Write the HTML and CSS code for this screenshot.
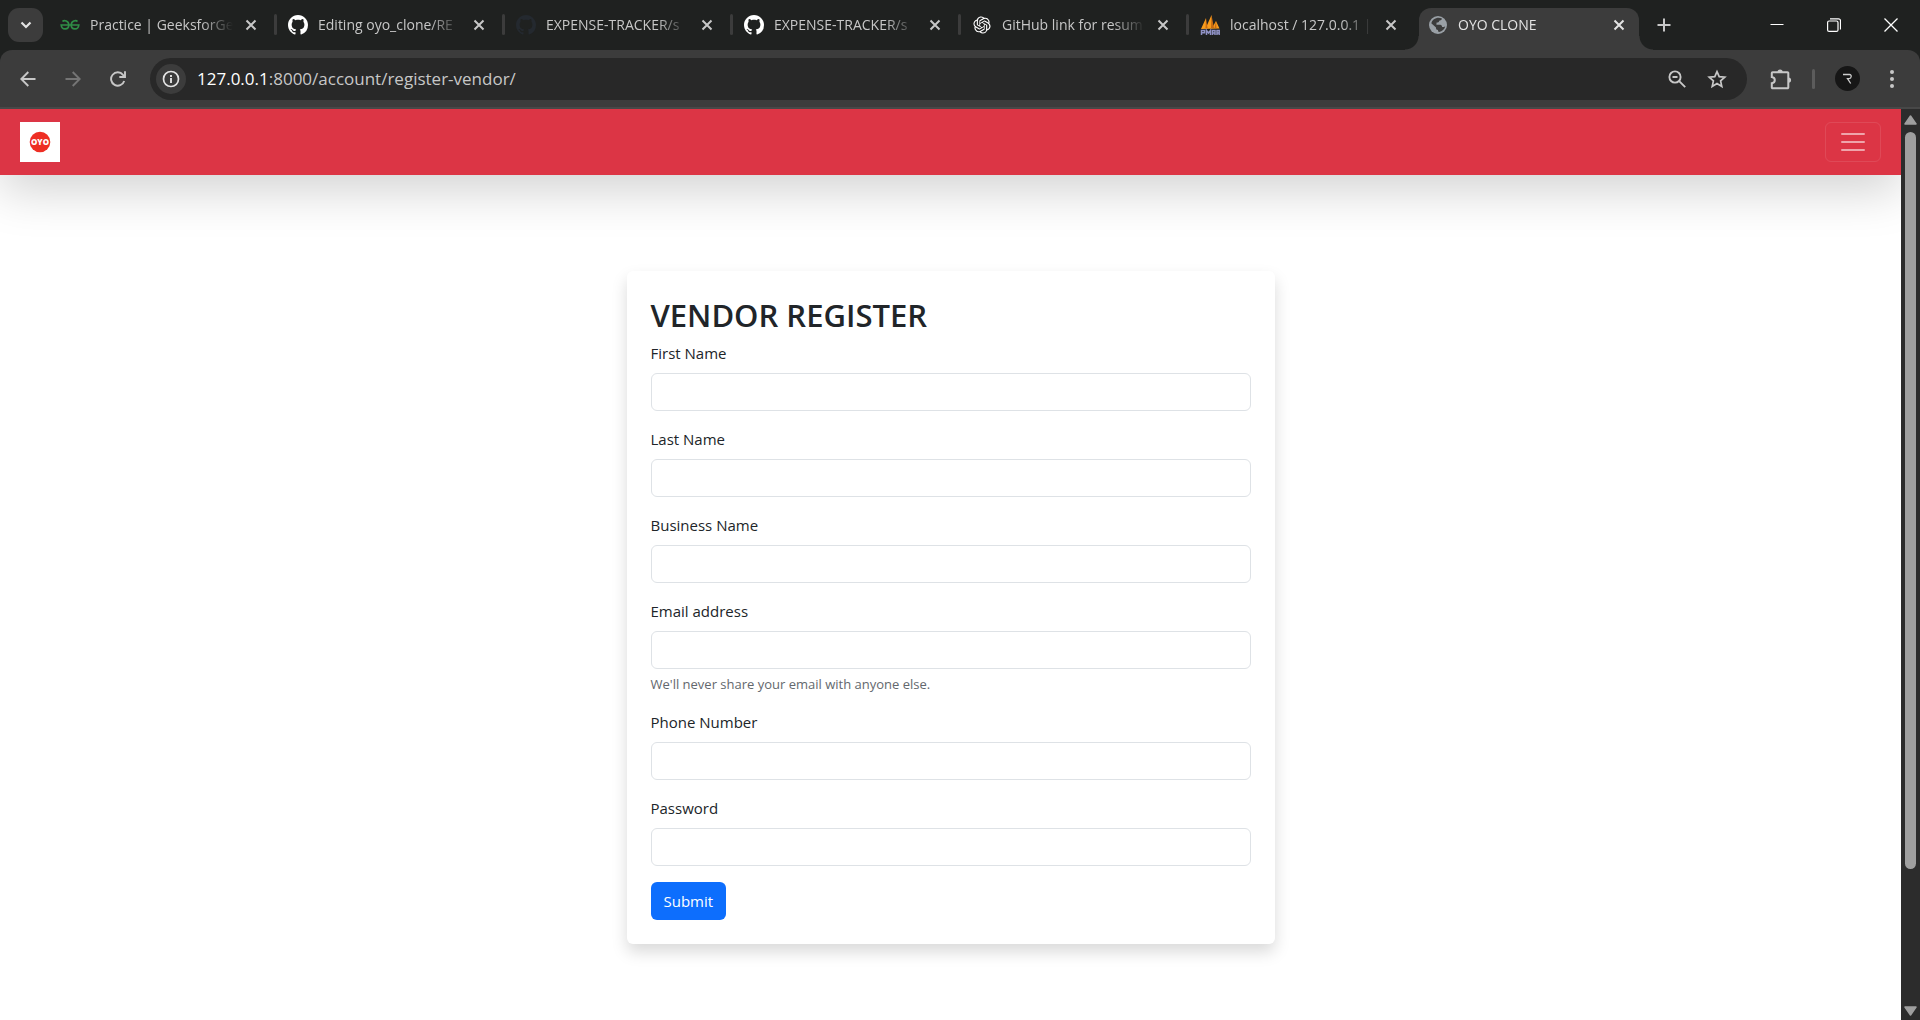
FILE: index.html
```html
<!DOCTYPE html>
<html lang="en">
<head>
<meta charset="utf-8">
<meta name="viewport" content="width=device-width, initial-scale=1">
<title>OYO CLONE</title>
<link rel="stylesheet" href="styles.css">
</head>
<body>
<svg class="defs" aria-hidden="true">
  <symbol id="x" viewBox="0 0 12 12"><path d="M1.5 1.5l9 9M10.500 1.500l-9 9" fill="none" stroke="currentColor" stroke-width="2"/></symbol>
  <symbol id="github" viewBox="0 0 16 16"><path fill="currentColor" d="M8 0C3.58 0 0 3.58 0 8c0 3.54 2.29 6.53 5.47 7.59.4.07.55-.17.55-.38 0-.19-.01-.82-.01-1.49-2.01.37-2.53-.49-2.69-.94-.09-.23-.48-.94-.82-1.13-.28-.15-.68-.52-.01-.53.63-.01 1.08.58 1.23.82.72 1.21 1.87.87 2.33.66.07-.52.28-.87.51-1.07-1.78-.2-3.64-.89-3.64-3.95 0-.87.31-1.59.82-2.15-.08-.2-.36-1.02.08-2.12 0 0 .67-.21 2.2.82.64-.18 1.32-.27 2-.27s1.36.09 2 .27c1.53-1.04 2.2-.82 2.2-.82.44 1.1.16 1.92.08 2.12.51.56.82 1.27.82 2.15 0 3.07-1.87 3.75-3.65 3.95.29.25.54.73.54 1.48 0 1.07-.01 1.93-.01 2.2 0 .21.15.46.55.38A8.01 8.01 0 0 0 16 8c0-4.42-3.58-8-8-8z"/></symbol>
</svg>

<header class="browser">
  <div class="tabstrip">
    <button class="tab-search" aria-label="Search tabs"><svg width="12" height="8" viewBox="0 0 12 8"><path d="M1.500 1.500L6 6l4.500-4.500" fill="none" stroke="currentColor" stroke-width="2.200"/></svg></button>
    <nav class="tabs" aria-label="Open tabs">
      <div class="tab">
        <svg class="favicon" viewBox="0 0 20 20" fill="none" stroke="#2f8d46" stroke-width="1.700"><path d="M2.500 6.500C4 4.800 8.800 5.500 8.800 10c0 5-7 5.500-7.600 0h17.600c-.6 5.500-7.600 5-7.600 0 0-4.500 4.800-5.200 6.300-3.500"/></svg>
        <a class="title" href="#">Practice | GeeksforGe</a>
        <button class="close" aria-label="Close tab"><svg><use href="#x"/></svg></button>
      </div>
      <div class="tab">
        <svg class="favicon white"><use href="#github"/></svg>
        <a class="title" href="#">Editing oyo_clone/RE</a>
        <button class="close" aria-label="Close tab"><svg><use href="#x"/></svg></button>
      </div>
      <div class="tab">
        <svg class="favicon navy"><use href="#github"/></svg>
        <a class="title" href="#">EXPENSE-TRACKER/s</a>
        <button class="close" aria-label="Close tab"><svg><use href="#x"/></svg></button>
      </div>
      <div class="tab">
        <svg class="favicon white"><use href="#github"/></svg>
        <a class="title" href="#">EXPENSE-TRACKER/s</a>
        <button class="close" aria-label="Close tab"><svg><use href="#x"/></svg></button>
      </div>
      <div class="tab">
        <svg class="favicon white" viewBox="-2 -2 28 28"><path fill="currentColor" d="M22.2819 9.8211a5.9847 5.9847 0 0 0-.5157-4.9108 6.0462 6.0462 0 0 0-6.5098-2.9A6.0651 6.0651 0 0 0 4.9807 4.1818a5.9847 5.9847 0 0 0-3.9977 2.9 6.0462 6.0462 0 0 0 .7427 7.0966 5.98 5.98 0 0 0 .511 4.9107 6.051 6.051 0 0 0 6.5146 2.9001A5.9847 5.9847 0 0 0 13.2599 24a6.0557 6.0557 0 0 0 5.7718-4.2058 5.9894 5.9894 0 0 0 3.9977-2.9001 6.0557 6.0557 0 0 0-.7475-7.073zm-9.022 12.6081a4.4755 4.4755 0 0 1-2.8764-1.0408l.1419-.0804 4.7783-2.7582a.7948.7948 0 0 0 .3927-.6813v-6.7369l2.02 1.1686a.071.071 0 0 1 .038.052v5.5826a4.504 4.504 0 0 1-4.4945 4.4944zm-9.6607-4.1254a4.4708 4.4708 0 0 1-.5346-3.0137l.142.0852 4.783 2.7582a.7712.7712 0 0 0 .7806 0l5.8428-3.3685v2.3324a.0804.0804 0 0 1-.0332.0615L9.74 19.9502a4.4992 4.4992 0 0 1-6.1408-1.6464zM2.3408 7.8956a4.485 4.485 0 0 1 2.3655-1.9728V11.6a.7664.7664 0 0 0 .3879.6765l5.8144 3.3543-2.0201 1.1685a.0757.0757 0 0 1-.071 0l-4.8303-2.7865A4.504 4.504 0 0 1 2.3408 7.872zm16.5963 3.8558L13.1038 8.364 15.1192 7.2a.0757.0757 0 0 1 .071 0l4.8303 2.7913a4.4944 4.4944 0 0 1-.6765 8.1042v-5.6772a.79.79 0 0 0-.407-.667zm2.0107-3.0231l-.142-.0852-4.7735-2.7818a.7759.7759 0 0 0-.7854 0L9.409 9.2297V6.8974a.0662.0662 0 0 1 .0284-.0615l4.8303-2.7866a4.4992 4.4992 0 0 1 6.6802 4.66zM8.3065 12.863l-2.02-1.1638a.0804.0804 0 0 1-.038-.0567V6.0742a4.4992 4.4992 0 0 1 7.3757-3.4537l-.142.0805L8.704 5.459a.7948.7948 0 0 0-.3927.6813zm1.0976-2.3654l2.602-1.4998 2.6069 1.4998v2.9994l-2.5974 1.4997-2.6067-1.4997Z"/></svg>
        <a class="title" href="#">GitHub link for resum</a>
        <button class="close" aria-label="Close tab"><svg><use href="#x"/></svg></button>
      </div>
      <div class="tab">
        <svg class="favicon" viewBox="0 0 20 20"><path fill="#f89c1c" d="M1 14L6 3v9.500L11.500 0l1 12L16 6l3.500 7.500z"/><path fill="#c76a12" d="M6 3l1.500 10h-2zM11.500 0L14 13h-3zM16 6l.5 7h-2z"/><path fill="none" stroke="#8f91c4" stroke-width="1.500" d="M1.500 20v-4.500h3v2.300h-3M6.500 20v-4.500l2 2.500 2-2.500V20M12.500 20v-4.500h2.500V20m-2.500-2h2.500M17 20v-4.500h2.200V20m-2.200-2h2.200"/></svg>
        <a class="title" href="#">localhost / 127.0.0.1 |</a>
        <button class="close" aria-label="Close tab"><svg><use href="#x"/></svg></button>
      </div>
      <div class="tab active">
        <svg class="favicon" viewBox="0 0 20 20"><circle cx="10" cy="10" r="9" fill="#9aa0a6"/><path fill="#3c3c3c" d="M8.800 3C9.500 2.500 12 2.400 14 3.600c-.2 1.400-1.500 1.900-2.800 2.100-.3 1.500-1.200 2-2.600 1.900l-.2 2.100h3.800c1.300 0 1.900 1 1.900 2.300h1.600c.5 0 .8-.6 1.500-.6-.7 2.700-3 5-6 5.600-.9-.2-1.300-1-1.200-2.100-1.700 0-2-.8-2-2.500L3.300 8.200C4 5.500 6 3.500 8.800 3z"/><path fill="#9aa0a6" d="M3.300 9L8 13.400c0 .8.500 1.200 1.500 1.300v2.400C5.600 16.800 2.800 13.500 3.300 9z" opacity=".25"/></svg>
        <a class="title" href="#" aria-current="page">OYO CLONE</a>
        <button class="close" aria-label="Close tab"><svg><use href="#x"/></svg></button>
      </div>
    </nav>
    <button class="new-tab" aria-label="New tab"><svg width="14" height="14" viewBox="0 0 14 14"><path d="M7 .5v13M.5 7h13" stroke="currentColor" stroke-width="2"/></svg></button>
    <div class="window-controls">
      <button aria-label="Minimize"><svg width="14" height="14" viewBox="0 0 14 14"><path d="M.5 6.500h13" stroke="currentColor"/></svg></button>
      <button aria-label="Restore"><svg width="14" height="14" viewBox="0 0 14 14" fill="none" stroke="currentColor" stroke-width="1.200"><rect x=".6" y="3" width="10.400" height="10.400" rx="1.500"/><path d="M3 .8h8.500a2 2 0 0 1 2 2V11.500"/></svg></button>
      <button aria-label="Close window"><svg width="14" height="14" viewBox="0 0 14 14"><path d="M.5.5l13 13M13.500.5l-13 13" stroke="currentColor" stroke-width="1.300"/></svg></button>
    </div>
  </div>

  <div class="toolbar">
    <div class="nav-buttons">
      <button aria-label="Back"><svg width="16" height="16" viewBox="0 0 16 16" fill="none" stroke="currentColor" stroke-width="1.900"><path d="M15.500 8H1.800M8.300 1L1.300 8l7 7"/></svg></button>
      <button class="dim" aria-label="Forward"><svg width="16" height="16" viewBox="0 0 16 16" fill="none" stroke="currentColor" stroke-width="1.900"><path d="M.5 8h13.700M7.700 1l7 7-7 7"/></svg></button>
      <button aria-label="Reload"><svg width="16" height="16" viewBox="0 0 16 16" fill="none" stroke="currentColor" stroke-width="1.900"><path d="M14.200 10A6.700 6.700 0 1 1 13 3.800l1.500 1.700"/><path d="M15 .3V6H9.300"/></svg></button>
    </div>
    <div class="omnibox">
      <button class="site-info" aria-label="Site information"><svg width="18" height="18" viewBox="0 0 18 18"><circle cx="9" cy="9" r="7.500" fill="none" stroke="currentColor" stroke-width="1.700"/><path d="M9 8v5M9 5v2" stroke="currentColor" stroke-width="1.900"/></svg></button>
      <div class="address"><label for="url">127.0.0.1</label><input id="url" type="text" value=":8000/account/register-vendor/"></div>
      <button aria-label="Zoom"><svg width="18" height="18" viewBox="0 0 18 18" fill="none" stroke="currentColor" stroke-width="1.900"><circle cx="7" cy="7" r="5.600"/><path d="M11.200 11.200l6 6M4.500 7h5"/></svg></button>
      <button aria-label="Bookmark"><svg width="20" height="20" viewBox="0 0 20 20" fill="none" stroke="currentColor" stroke-width="1.700"><path d="M10 2.600l2.200 5.100 5.600.5-4.200 3.700 1.200 5.500-4.800-2.900-4.800 2.900 1.200-5.500-4.200-3.700 5.600-.5z"/></svg></button>
    </div>
    <div class="tools">
      <button aria-label="Extensions"><svg width="22" height="22" viewBox="0 0 22 22"><path d="M2.600 4.200h14.900a.8.800 0 0 1 .8.800v14.500a.8.800 0 0 1-.8.800H2.600a.8.800 0 0 1-.8-.8v-4.300c4-.4 4-5.800 0-6.200V5a.8.800 0 0 1 .8-.8z" fill="none" stroke="currentColor" stroke-width="2"/><path d="M7.500 4a2.600 2.600 0 0 1 5.200 0zM18.500 9.400a2.600 2.600 0 0 1 0 5.200z" fill="currentColor"/></svg></button>
      <span class="divider"></span>
      <button class="profile" aria-label="Profile"><svg width="25" height="25" viewBox="0 0 25 25"><circle cx="12.500" cy="12.500" r="12.500" fill="#161616"/><path d="M8 8.500h6.500c2.500 0 2.200 4-.5 4.200h-1.500l3.200 4.800" fill="none" stroke="#ccc" stroke-width="1.300"/></svg></button>
      <button class="menu" aria-label="Menu"><svg width="4" height="18" viewBox="0 0 4 18" fill="currentColor"><circle cx="2" cy="2" r="2"/><circle cx="2" cy="9" r="2"/><circle cx="2" cy="16" r="2"/></svg></button>
    </div>
  </div>
</header>

<div class="viewport">
  <div class="page">
    <nav class="navbar" aria-label="Main">
      <a class="brand" href="#" aria-label="OYO home"><svg width="40" height="40" viewBox="0 0 40 40"><path fill="#fff" d="M0 0h40v40H0z"/><circle cx="20" cy="20" r="10.300" fill="#ee2e24"/><text x="20" y="23" text-anchor="middle">OYO</text></svg></a>
      <button class="toggler" aria-label="Toggle navigation"><svg width="30" height="30" viewBox="0 0 30 30"><path d="M4 7h22M4 15h22M4 23h22" stroke="#fff" stroke-opacity=".55" stroke-width="2" stroke-linecap="round"/></svg></button>
    </nav>
    <main class="content">
      <form class="card" onsubmit="return false">
        <h2>VENDOR REGISTER</h2>
        <div class="field"><label for="first">First Name</label><input id="first" type="text"></div>
        <div class="field"><label for="last">Last Name</label><input id="last" type="text"></div>
        <div class="field"><label for="business">Business Name</label><input id="business" type="text"></div>
        <div class="field"><label for="email">Email address</label><input id="email" type="email" aria-describedby="email-help"><small id="email-help">We'll never share your email with anyone else.</small></div>
        <div class="field"><label for="phone">Phone Number</label><input id="phone" type="tel"></div>
        <div class="field"><label for="password">Password</label><input id="password" type="password"></div>
        <button class="submit" type="submit">Submit</button>
      </form>
    </main>
  </div>
  <div class="scrollbar" aria-hidden="true">
    <svg width="13" height="10" viewBox="0 0 13 10"><path d="M6.500 1L12 9H1z" fill="#9f9f9f" stroke="#9f9f9f" stroke-width="1.500" stroke-linejoin="round"/></svg>
    <div class="track"><div class="thumb"></div></div>
    <svg width="13" height="10" viewBox="0 0 13 10"><path d="M6.500 9L12 1H1z" fill="#9f9f9f" stroke="#9f9f9f" stroke-width="1.500" stroke-linejoin="round"/></svg>
  </div>
</div>
</body>
</html>
```
FILE: styles.css
```css
* { box-sizing: border-box; }

body {
  margin: 0;
  height: 100vh;
  display: flex;
  flex-direction: column;
  overflow: hidden;
  background: #fff;
  color: #212529;
  font: 15px/24px "Open Sans", "Noto Sans", sans-serif;
}

button, input { font: inherit; color: inherit; }
button { padding: 0; border: 0; background: none; }
a { color: inherit; text-decoration: none; }
svg { display: block; flex: none; }
.defs { position: absolute; width: 0; height: 0; }

/* Tab strip */
.browser { flex: none; background: #1f2120; color: #c7c7c7; }
.tabstrip { display: flex; align-items: center; height: 50px; padding: 0 1px 0 8px; }
.tab-search {
  display: grid;
  place-items: center;
  width: 35px;
  height: 34px;
  border-radius: 11px;
  background: #3c3c3c;
  color: #e3e3e3;
}
.tabs { display: flex; align-self: stretch; flex: 0 1 1596px; margin-left: 2px; min-width: 0; }
.tab {
  position: relative;
  flex: 1 1 0;
  min-width: 0;
  display: flex;
  align-items: center;
  padding: 0 16px 0 15px;
  font-size: 14px;
}
.tab::after {
  content: "";
  position: absolute;
  right: -4px;
  top: 14px;
  width: 3px;
  height: 21px;
  border-radius: 2px;
  background: #3c3c3c;
}
.tab:nth-last-child(2)::after { display: none; }
.favicon { width: 20px; height: 20px; }
.white { color: #fff; }
.navy { color: #24292f; }
.title {
  flex: 1;
  min-width: 0;
  margin: 0 12px 0 10px;
  overflow: hidden;
  white-space: nowrap;
  -webkit-mask-image: linear-gradient(90deg, #000 calc(100% - 32px), transparent);
  mask-image: linear-gradient(90deg, #000 calc(100% - 32px), transparent);
}
.close svg { width: 12px; height: 12px; }
.active { margin-top: 8px; padding-bottom: 8px; color: #e3e3e3; }
.active::before {
  content: "";
  position: absolute;
  inset: 0 2px 0 6px;
  border-radius: 12px 12px 0 0;
  background: #3c3c3c;
}
/* Curved feet where the selected tab meets the toolbar */
.active::after {
  inset: auto -12px 0 -8px;
  width: auto;
  height: 14px;
  border-radius: 0;
  background:
    radial-gradient(circle at 0 0, transparent 13px, #3c3c3c 14px) left / 14px 14px no-repeat,
    radial-gradient(circle at 100% 0, transparent 13px, #3c3c3c 14px) right / 14px 14px no-repeat;
}
.active > * { position: relative; }
.new-tab { margin-left: 16px; }
.window-controls { display: flex; margin-left: auto; color: #fff; }
.window-controls button { display: grid; place-items: center; width: 57px; height: 48px; }

/* Toolbar */
.toolbar {
  display: flex;
  align-items: center;
  height: 59px;
  padding: 8px 26px 8px 20px;
  border-bottom: 2px solid #484848;
  border-radius: 12px 12px 0 0;
  background: #3c3c3c;
}
.nav-buttons { display: flex; gap: 29px; width: 130px; }
.dim { color: #757575; }
.omnibox {
  flex: 1;
  min-width: 0;
  display: flex;
  align-items: center;
  gap: 21px;
  height: 42px;
  padding: 0 20px 0 6px;
  border-radius: 21px;
  background: #282828;
}
.site-info {
  display: grid;
  place-items: center;
  width: 30px;
  height: 30px;
  border-radius: 50%;
  background: #3c3c3c;
  color: #e3e3e3;
}
.address { flex: 1; min-width: 0; display: flex; margin-left: -10px; font-size: 17px; }
.address label { color: #fff; }
.address input { flex: 1; min-width: 0; padding: 0; border: 0; outline: 0; background: none; color: #c7c7c7; }
.tools { display: flex; align-items: center; margin-left: 23px; }
.divider { width: 3px; height: 20px; margin: 0 20px; border-radius: 2px; background: #5c5c5c; }
.menu { margin-left: 30px; }

/* Page area */
.viewport { flex: 1; min-height: 0; display: flex; }
.page { flex: 1; min-width: 0; overflow: hidden; }
.navbar {
  display: flex;
  align-items: center;
  justify-content: space-between;
  height: 66px;
  padding: 0 20px;
  background: #dc3545;
  box-shadow: 0 16px 48px rgba(0, 0, 0, .175);
}
.brand text { fill: #fff; font: 800 8px/8px "Open Sans", sans-serif; }
.toggler { padding: 4px 12px; border: 1px solid rgba(255, 255, 255, .1); border-radius: 6px; }
.content { padding: 96px 24px; }
.card {
  max-width: 648px;
  margin: 0 auto;
  padding: 24px;
  border-radius: 6px;
  background: #fff;
  box-shadow: 0 8px 16px rgba(0, 0, 0, .15);
}
h2 { margin: 0 0 6px; font-size: 31px; line-height: 40px; font-weight: 600; }
.field { display: flex; flex-direction: column; margin-bottom: 16px; }
.field label { margin-bottom: 8px; }
.field input {
  width: 100%;
  height: 38px;
  padding: 6px 12px;
  border: 1px solid #dee2e6;
  border-radius: 6px;
  background: #fff;
}
.field small { margin-top: 5px; color: #63686d; font-size: 13px; line-height: 20px; }
.submit { height: 38px; padding: 0 13px; border-radius: 6px; background: #0d6efd; color: #fff; }

/* Scrollbar */
.scrollbar {
  flex: none;
  width: 19px;
  display: flex;
  flex-direction: column;
  align-items: center;
  gap: 7px;
  padding: 6px 0 4px;
  background: #2c2c2c;
}
.track { flex: 1; width: 11px; }
.thumb { height: 85%; border-radius: 6px; background: #9f9f9f; }
```
